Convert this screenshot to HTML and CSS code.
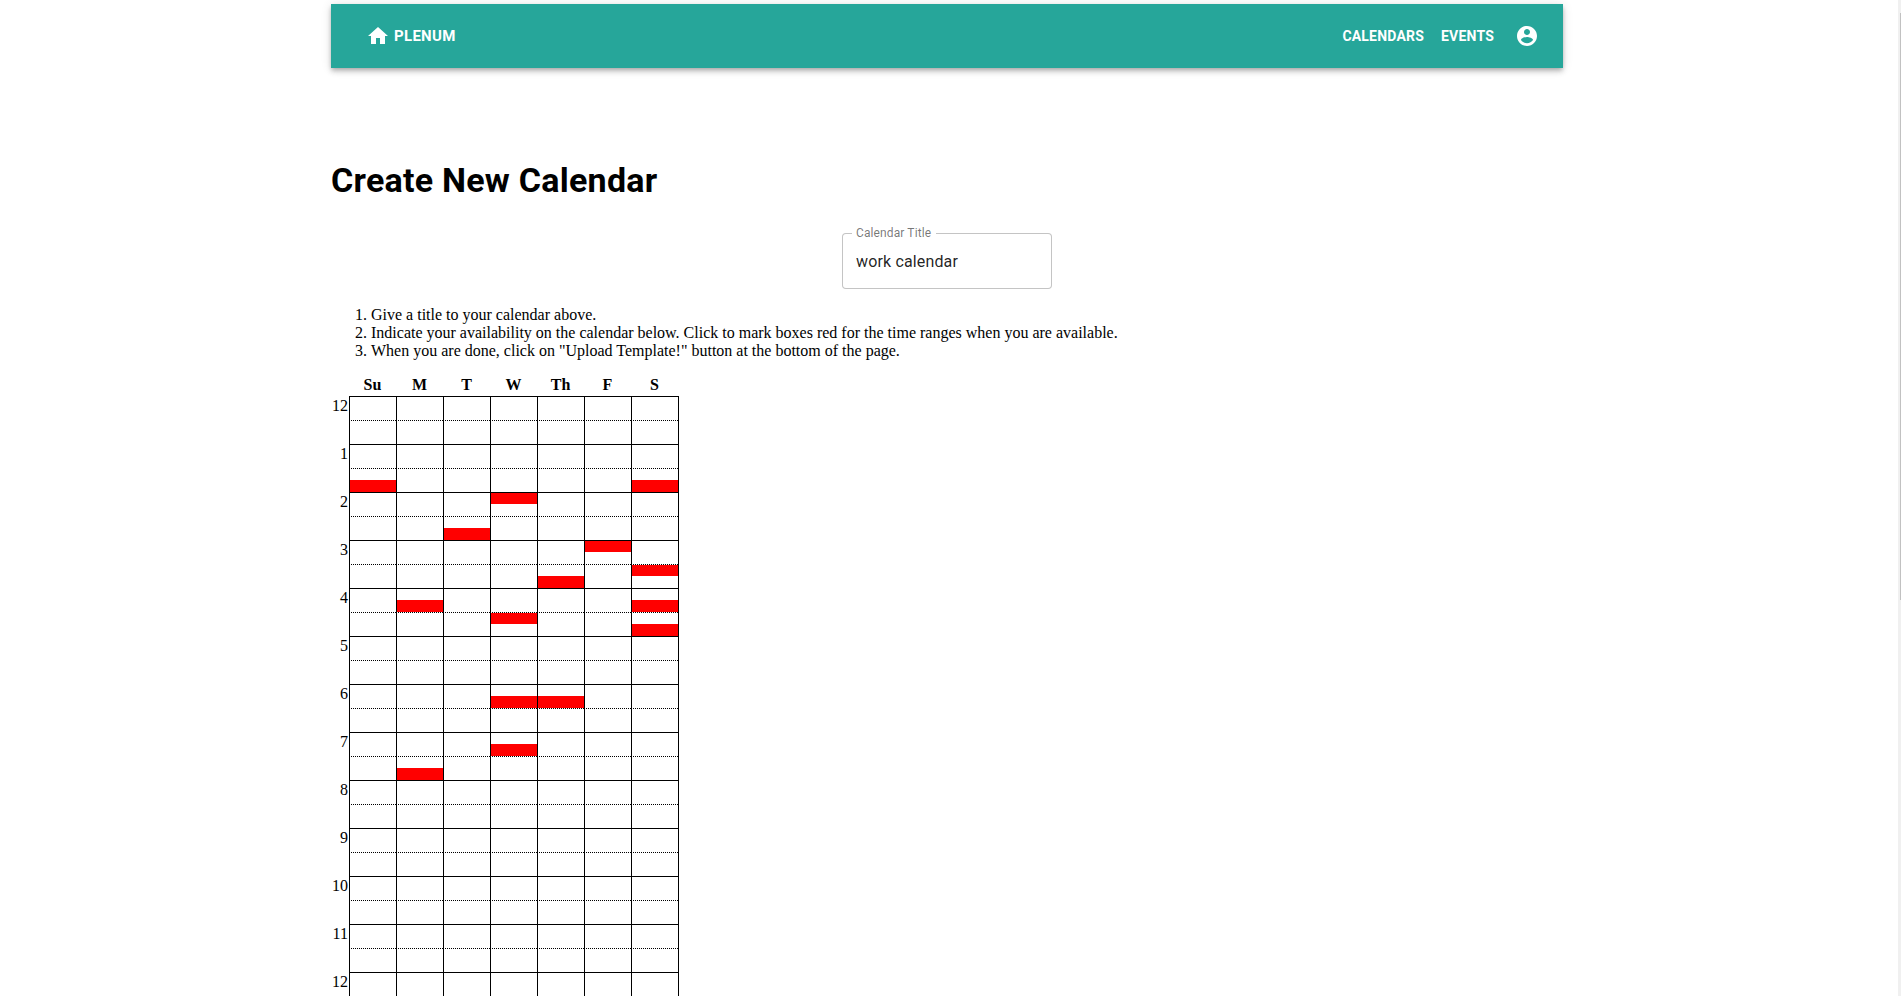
FILE: index.html
```html
<!DOCTYPE html>
<html lang="en">
<head>
    <meta charset="UTF-8">
    <meta name="viewport" content="width=device-width, initial-scale=1.0">
    <title>Plenum</title>
    <link rel="stylesheet" href="styles.css">
</head>
<body>
    <div class="page">
        <header class="app-bar">
            <a class="nav-link brand" href="#">
                <svg class="icon" viewBox="0 0 24 24"><path d="M10 20v-6h4v6h5v-8h3L12 3 2 12h3v8z"/></svg>
                Plenum
            </a>
            <nav class="nav">
                <a class="nav-link" href="#">Calendars</a>
                <a class="nav-link" href="#">Events</a>
                <a class="account" href="#">
                    <svg class="icon" viewBox="0 0 24 24"><path d="M12 2C6.48 2 2 6.48 2 12s4.48 10 10 10 10-4.48 10-10S17.52 2 12 2zm0 3c1.66 0 3 1.34 3 3s-1.34 3-3 3-3-1.34-3-3 1.34-3 3-3zm0 14.2c-2.5 0-4.71-1.28-6-3.22.03-1.99 4-3.08 6-3.08 1.99 0 5.97 1.09 6 3.08-1.29 1.94-3.5 3.22-6 3.22z"/></svg>
                </a>
            </nav>
        </header>

        <h1 class="page-title">Create New Calendar</h1>

        <div class="title-row">
            <div class="text-field">
                <label class="field-label" for="calendarTitle">Calendar Title</label>
                <input class="field-input" id="calendarTitle" type="text" value="work calendar">
            </div>
        </div>

        <ol class="steps">
            <li>Give a title to your calendar above.</li>
            <li>Indicate your availability on the calendar below. Click to mark boxes red for the time ranges when you are available.</li>
            <li>When you are done, click on "Upload Template!" button at the bottom of the page.</li>
        </ol>

        <div class="calendar">
            <div class="day-names">
                <span>Su</span><span>M</span><span>T</span><span>W</span><span>Th</span><span>F</span><span>S</span>
            </div>
            <div class="calendar-body">
                <div class="hours" id="hours"></div>
                <div class="slots" id="slots"></div>
            </div>
        </div>

        <button class="upload" type="button">Upload Template!</button>
    </div>

    <div class="scroll-track"><div class="scroll-thumb"></div></div>

    <script src="script.js"></script>
</body>
</html>
```

FILE: styles.css
```css
/* General Styles */
body {
    margin: 0;
    padding: 4px 7px 0 0;
    font-family: "Liberation Serif", "Times New Roman", serif;
    font-size: 16px;
    color: #000;
    background: #fff;
}

.page {
    width: 1232px;
    margin: 0 auto;
}

/* Scrollbar */
.scroll-track {
    position: fixed;
    top: 0;
    right: 0;
    bottom: 0;
    width: 3px;
    padding-top: 13px;
    box-sizing: border-box;
    background: #f0f0f0;
}

.scroll-thumb {
    width: 1px;
    height: 587px;
    margin-left: 2px;
    background: #c1c1c1;
}

/* App Bar */
.app-bar {
    display: flex;
    justify-content: space-between;
    align-items: center;
    height: 64px;
    padding: 0 24px 0 35px;
    box-sizing: border-box;
    background: #26a69a;
    color: #fff;
    box-shadow: 0 2px 4px -1px rgba(0, 0, 0, 0.2), 0 4px 5px 0 rgba(0, 0, 0, 0.14), 0 1px 10px 0 rgba(0, 0, 0, 0.12);
}

.nav {
    display: flex;
    align-items: center;
    gap: 17px;
}

.nav-link {
    display: flex;
    align-items: center;
    gap: 4px;
    font-family: Roboto, sans-serif;
    font-size: 14px;
    font-weight: 700;
    letter-spacing: 0.2px;
    text-transform: uppercase;
    text-decoration: none;
    color: #fff;
}

.brand {
    font-size: 15px;
    letter-spacing: 0.3px;
}

.account {
    display: flex;
    margin-left: 4px;
    color: #fff;
}

.icon {
    width: 24px;
    height: 24px;
    fill: currentColor;
}

/* Title */
.page-title {
    margin: 91px 0 32px;
    font-family: Roboto, sans-serif;
    font-size: 34px;
    font-weight: 700;
    line-height: 42px;
    letter-spacing: 0.00735em;
}

.title-row {
    display: flex;
    justify-content: center;
}

.text-field {
    position: relative;
    width: 210px;
}

.field-input {
    display: block;
    width: 100%;
    height: 56px;
    padding: 0 13px;
    box-sizing: border-box;
    border: 1px solid rgba(0, 0, 0, 0.23);
    border-radius: 4px;
    font-family: Roboto, sans-serif;
    font-size: 16px;
    letter-spacing: 0.00938em;
    color: rgba(0, 0, 0, 0.87);
    outline: none;
}

.field-label {
    position: absolute;
    top: -7px;
    left: 10px;
    padding: 0 5px 0 4px;
    background: #fff;
    font-family: Roboto, sans-serif;
    font-size: 12px;
    line-height: 14px;
    letter-spacing: 0.00938em;
    color: rgba(0, 0, 0, 0.54);
}

/* Instructions */
.steps {
    margin: 17px 0 16px;
}

/* Calendar */
.day-names {
    display: grid;
    grid-template-columns: repeat(7, 47px);
    margin: 0 0 2px 18px;
    font-weight: bold;
    text-align: center;
}

.calendar-body {
    display: flex;
}

.hours {
    width: 18px;
}

.hour-label {
    height: 48px;
    padding: 1px 1px 0 0;
    box-sizing: border-box;
    text-align: right;
}

.slots {
    display: grid;
    grid-template-columns: repeat(7, 47px);
    grid-auto-rows: 12px;
    border-right: 1px solid #000;
    border-bottom: 1px dotted #000;
}

.slot {
    box-sizing: border-box;
    border-left: 1px solid #000;
}

.slot-hour {
    border-top: 1px solid #000;
}

.slot-half {
    border-top: 1px dotted #000;
}

.slot-marked {
    background: #f00;
    background-clip: padding-box;
}

/* Upload Button */
.upload {
    display: block;
    margin: 32px 0 30px;
    padding: 6px 16px;
    border: none;
    border-radius: 4px;
    background: #26a69a;
    color: #fff;
    font-family: Roboto, sans-serif;
    font-size: 14px;
    font-weight: 500;
    line-height: 24px;
    text-transform: uppercase;
}
```

FILE: script.js
```js
// marked quarter hours, as [day, slot] with four slots to the hour
const marked = [
    [0, 7], [6, 7], [3, 8], [2, 11], [5, 12], [6, 14], [4, 15],
    [1, 17], [6, 17], [3, 18], [6, 19], [3, 25], [4, 25], [3, 29], [1, 31]
];

const hours = document.getElementById('hours');
const slots = document.getElementById('slots');

for (let h = 0; h < 24; h++) {
    const label = document.createElement('div');
    label.className = 'hour-label';
    label.innerText = h % 12 === 0 ? 12 : h % 12;
    hours.appendChild(label);
}

for (let s = 0; s < 96; s++) {
    for (let d = 0; d < 7; d++) {
        const slot = document.createElement('div');
        slot.className = 'slot';
        if (s % 4 === 0) slot.classList.add('slot-hour');
        if (s % 4 === 2) slot.classList.add('slot-half');
        if (marked.some(m => m[0] === d && m[1] === s)) slot.classList.add('slot-marked');
        slots.appendChild(slot);
    }
}
```
